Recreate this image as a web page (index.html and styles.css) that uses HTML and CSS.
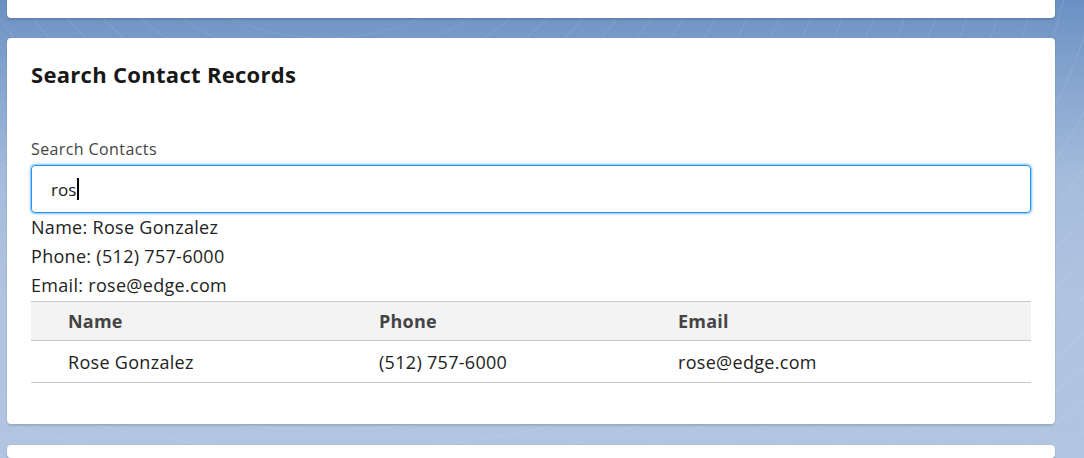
FILE: index.html
```html
<!DOCTYPE html>
<html lang="en">
<head>
<meta charset="utf-8">
<title>Search Contact Records</title>
<link rel="stylesheet" href="styles.css">
</head>
<body>
<div class="page">
  <div class="card card-top"></div>
  <div class="card card-main">
    <h2 class="card-title">Search Contact Records</h2>
    <div class="field">
      <label class="field-label" for="search">Search Contacts</label>
      <div class="input"><span class="input-value">ros</span><span class="caret"></span></div>
    </div>
    <div class="result">
      <div class="result-line">Name: Rose Gonzalez</div>
      <div class="result-line">Phone: (512) 757-6000</div>
      <div class="result-line">Email: rose@edge.com</div>
    </div>
    <table class="table">
      <thead>
        <tr><th class="col-name">Name</th><th class="col-phone">Phone</th><th class="col-email">Email</th></tr>
      </thead>
      <tbody>
        <tr><td>Rose Gonzalez</td><td>(512) 757-6000</td><td>rose@edge.com</td></tr>
      </tbody>
    </table>
  </div>
  <div class="card card-bottom"></div>
</div>
</body>
</html>
```
FILE: styles.css
```css
html, body {
  margin: 0;
  padding: 0;
  height: 100%;
}
body {
  font-family: "Open Sans", "Noto Sans", sans-serif;
  color: #181818;
  overflow: hidden;
  background:
    repeating-radial-gradient(ellipse at 30% -20%, rgba(255,255,255,0) 0 28px, rgba(255,255,255,0.10) 29px, rgba(255,255,255,0) 30px),
    linear-gradient(180deg, #6a90c2 0px, #7fa0cc 60px, #a5bcdc 180px, #b0c4e0 300px, #b1c5e0 458px);
}
.page {
  display: flex;
  flex-direction: column;
  width: 1048px;
  margin-left: 7px;
  margin-top: -30px;
}
.card {
  background: #fff;
  border-radius: 4px;
  box-shadow: 0 2px 2px rgba(0,0,0,0.12), 0 0 1px rgba(0,0,0,0.2);
}
.card-top { height: 48px; }
.card-bottom { height: 13px; margin-top: 21px; }
.card-main {
  margin-top: 20px;
  padding: 22px 24px 41px 24px;
  display: flex;
  flex-direction: column;
}
.card-title {
  margin: 0;
  font-size: 22px;
  font-weight: 700;
  line-height: 28px;
  letter-spacing: 0.3px;
  color: #181818;
}
.field {
  margin-top: 50px;
  display: flex;
  flex-direction: column;
  gap: 5px;
}
.field-label {
  font-size: 16px;
  line-height: 22px;
  letter-spacing: 0.4px;
  color: #444;
}
.input {
  height: 46px;
  border: 1px solid #1b96ff;
  border-radius: 4px;
  box-shadow: 0 0 3px #0176d3;
  display: flex;
  align-items: center;
  padding-left: 19px;
  font-size: 17px;
  color: #181818;
}
.caret {
  display: inline-block;
  width: 2px;
  height: 22px;
  background: #000;
  margin-left: 1px;
}
.result-line {
  font-size: 18px;
  line-height: 29px;
  letter-spacing: 0.3px;
  color: #222;
}
.table {
  margin-top: 1px;
  width: 1000px;
  border-collapse: collapse;
  table-layout: fixed;
  font-size: 18px;
  letter-spacing: 0.3px;
  color: #222;
}
.table th, .table td {
  text-align: left;
  padding: 0 0 0 37px;
}
.table thead tr {
  background: #f3f3f3;
  border-top: 1px solid #c9c9c9;
  border-bottom: 1px solid #c9c9c9;
}
.table th {
  height: 38px;
  font-weight: 700;
  letter-spacing: 0.2px;
  color: #444;
}
.table td {
  height: 41px;
  border-bottom: 1px solid #c9c9c9;
}
.col-name { width: 274px; }
.col-phone { width: 262px; }
```
